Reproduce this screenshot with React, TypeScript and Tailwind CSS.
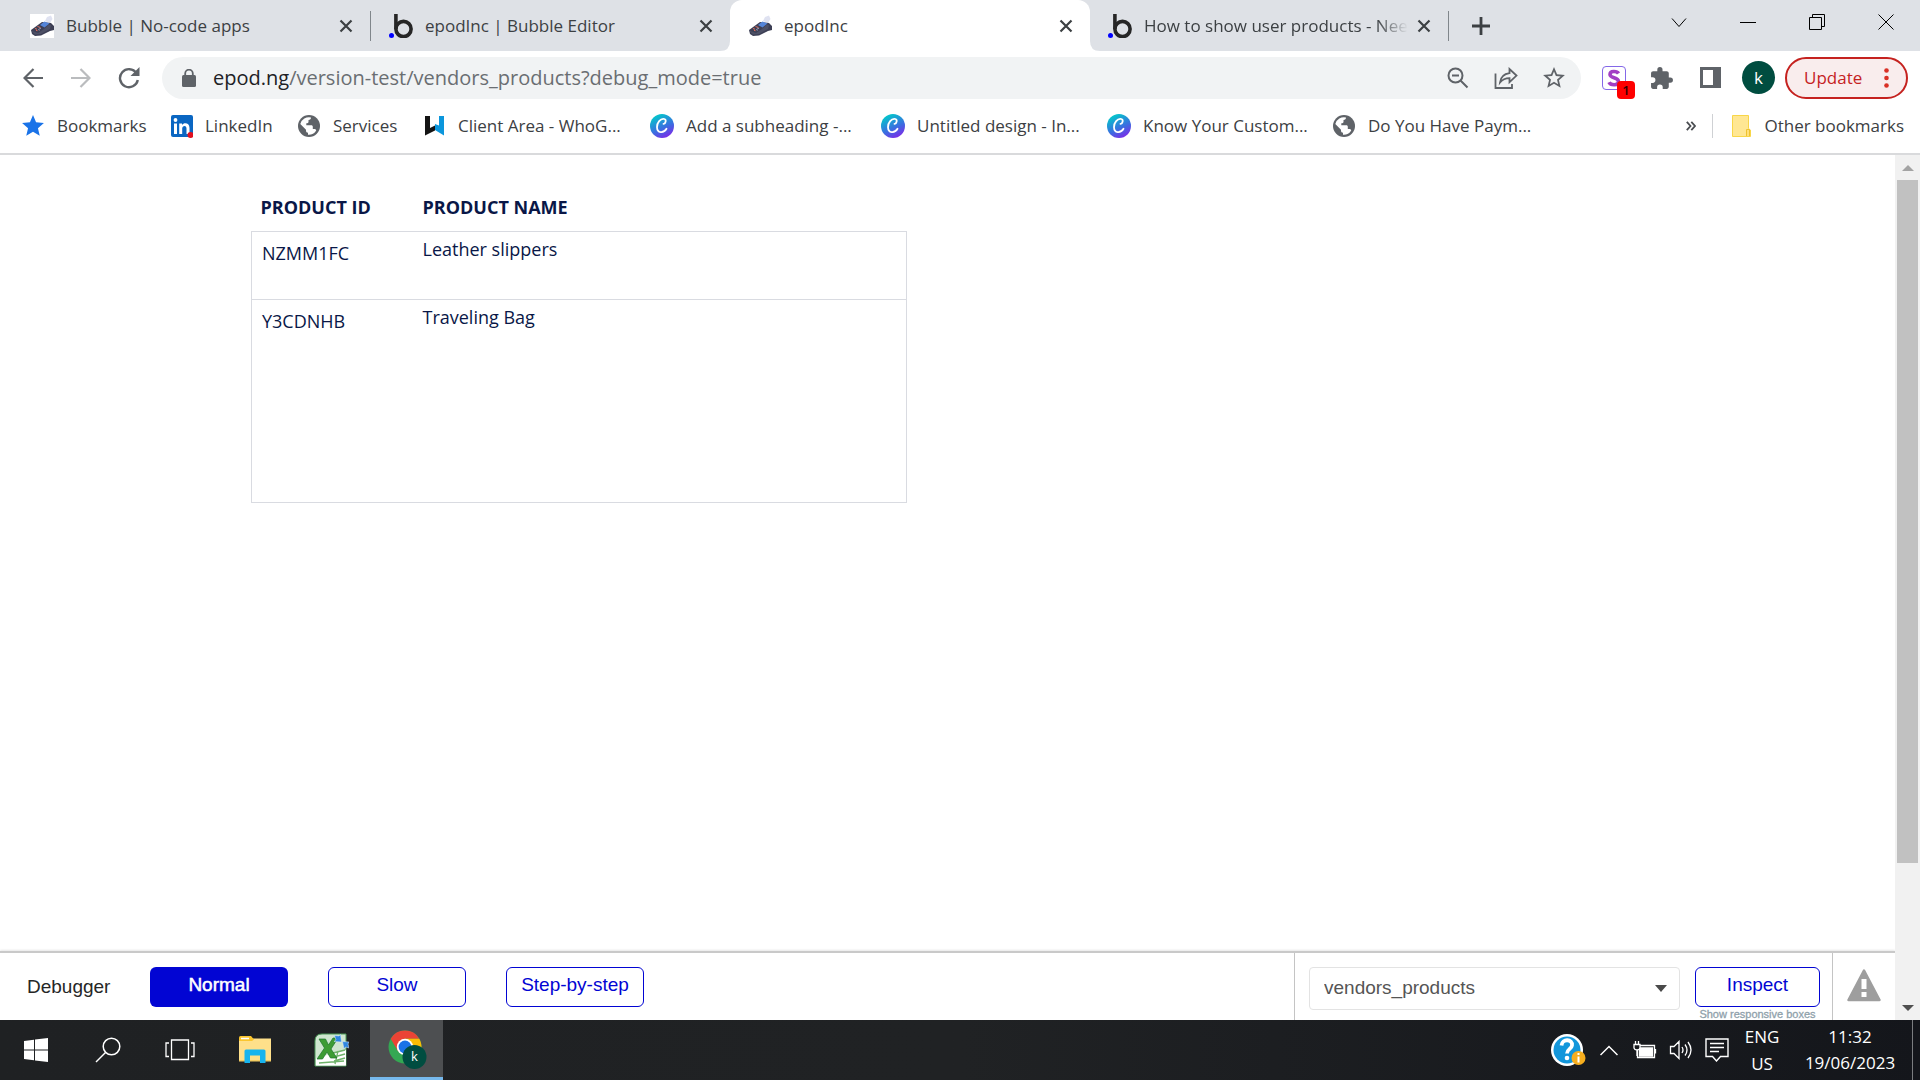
import type { ReactNode } from 'react'

const tabs = [
    { title: 'Bubble | No-code apps', icon: 'pos', active: false },
    { title: 'epodInc | Bubble Editor', icon: 'bubble', active: false },
    { title: 'epodInc', icon: 'pos', active: true },
    { title: 'How to show user products - Nee', icon: 'bubble', active: false },
]

const bookmarks = [
    { label: 'Bookmarks', icon: 'star', width: 'w-[148px]' },
    { label: 'LinkedIn', icon: 'linkedin', width: 'w-[128px]' },
    { label: 'Services', icon: 'globe', width: 'w-[125px]' },
    { label: 'Client Area - WhoG...', icon: 'whogohost', width: 'w-[228px]' },
    { label: 'Add a subheading -...', icon: 'canva', width: 'w-[231px]' },
    { label: 'Untitled design - In...', icon: 'canva', width: 'w-[226px]' },
    { label: 'Know Your Custom...', icon: 'canva', width: 'w-[225px]' },
    { label: 'Do You Have Paym...', icon: 'globe', width: 'w-[220px]' },
]

const products = [
    { id: 'NZMM1FC', name: 'Leather slippers', height: 'h-[68px]' },
    { id: 'Y3CDNHB', name: 'Traveling Bag', height: 'h-[203px]' },
]

export default function App() {
    return (
        <div className="flex h-screen flex-col overflow-hidden bg-white font-['Open_Sans','Noto_Sans',sans-serif] text-[#3c4043]">
            <TabStrip />
            <Toolbar />
            <BookmarksBar />
            <div className="flex min-h-0 flex-1">
                <div className="flex min-w-0 flex-1 flex-col">
                    <ProductsPage />
                    <Debugger />
                </div>
                <Scrollbar />
            </div>
            <Taskbar />
        </div>
    )
}

function TabStrip() {
    return (
        <header className="flex h-[51px] shrink-0 bg-[#dee1e6]">
            <div className="flex pl-3">
                {tabs.map((tab, i) => (
                    <div
                        key={i}
                        className={
                            tab.active
                                ? 'relative flex w-[360px] items-center rounded-t-xl bg-white pr-2 pl-[18px]'
                                : 'flex w-[359px] items-center pr-2 pl-[18px]'
                        }
                    >
                        {tab.active && <TabCurves />}
                        {tab.icon === 'pos' ? <PosIcon /> : <BubbleIcon />}
                        <span
                            className={
                                i === 3
                                    ? 'ml-3 flex-1 text-[17px] whitespace-nowrap [mask-image:linear-gradient(to_right,black_88%,transparent)]'
                                    : 'ml-3 flex-1 text-[17px] whitespace-nowrap'
                            }
                        >
                            {tab.title}
                        </span>
                        <button aria-label="Close tab" className="mx-1 flex h-6 w-6 items-center justify-center">
                            <svg width="14" height="14" viewBox="0 0 14 14" stroke="#3c4043" strokeWidth="2.2">
                                <path d="M1.5 1.5l11 11M12.5 1.5l-11 11" />
                            </svg>
                        </button>
                        {(i === 0 || i === 3) && <div className="-mr-2 ml-2 h-[30px] w-px bg-[#80868b]" />}
                    </div>
                ))}
            </div>
            <button aria-label="New tab" className="ml-5 flex w-6 items-center justify-center">
                <svg width="18" height="18" viewBox="0 0 18 18" stroke="#3c4043" strokeWidth="2.8">
                    <path d="M9 0v18M0 9h18" />
                </svg>
            </button>
            <div className="ml-auto flex h-11 text-black">
                <WindowButton label="Search tabs"><path d="M1 4.5l7 8 7-8" /></WindowButton>
                <WindowButton label="Minimize"><path d="M0 8.5h16" /></WindowButton>
                <WindowButton label="Restore"><path d="M.5 3.5h12v12H.5zM3.5 3.5v-3h12v12h-3" /></WindowButton>
                <WindowButton label="Close"><path d="M.5.5l15 15M15.5.5l-15 15" /></WindowButton>
            </div>
        </header>
    )
}

// Outward curves at the foot of the active tab
function TabCurves() {
    return (
        <>
            <svg className="absolute bottom-0 -left-[10px]" width="10" height="10" viewBox="0 0 10 10" fill="#fff">
                <path d="M10 0v10H0Q10 10 10 0z" />
            </svg>
            <svg className="absolute -right-[10px] bottom-0" width="10" height="10" viewBox="0 0 10 10" fill="#fff">
                <path d="M0 0v10h10Q0 10 0 0z" />
            </svg>
        </>
    )
}

function WindowButton({ label, children }: { label: string, children: ReactNode }) {
    return (
        <button aria-label={label} className="flex w-[69px] items-center justify-center">
            <svg width="16" height="16" viewBox="0 0 16 16" fill="none" stroke="currentColor">
                {children}
            </svg>
        </button>
    )
}

function Toolbar() {
    return (
        <div className="flex h-[53px] shrink-0 items-center pr-3 pl-[21px]">
            <button aria-label="Back" className="flex w-6 justify-center">
                <svg width="20" height="20" viewBox="0 0 20 20" fill="none" stroke="#5f6368" strokeWidth="2.2">
                    <path d="M20 10H2M10.5 1L1.5 10l9 9" />
                </svg>
            </button>
            <button aria-label="Forward" className="ml-6 flex w-6 justify-center">
                <svg width="20" height="20" viewBox="0 0 20 20" fill="none" stroke="#babcbe" strokeWidth="2.2">
                    <path d="M0 10h18M9.5 1l9 9-9 9" />
                </svg>
            </button>
            <button aria-label="Reload" className="ml-6 flex w-6 justify-center">
                <svg width="22" height="22" viewBox="0 0 22 22" fill="none" stroke="#5f6368" strokeWidth="2.4">
                    <path d="M18.5 6.2A9 9 0 1 0 19.8 13" />
                    <path d="M21.5 0v9h-9z" fill="#5f6368" stroke="none" />
                </svg>
            </button>
            <div className="ml-[21px] flex h-[42px] flex-1 items-center rounded-full bg-[#f1f3f4] pr-[15px] pl-5">
                <svg width="14" height="18" viewBox="0 0 14 18">
                    <rect y="6" width="14" height="12" rx="1.5" fill="#5f6368" />
                    <path d="M3.2 7V4.5a3.8 3.8 0 0 1 7.6 0V7" fill="none" stroke="#5f6368" strokeWidth="1.8" />
                </svg>
                <span className="ml-[17px] flex-1 pt-px text-[20px] whitespace-nowrap text-[#6a6e72]">
                    <span className="text-[#202124]">epod.ng</span>/version-test/vendors_products?debug_mode=true
                </span>
                <button aria-label="Zoom" className="flex w-6 justify-center">
                    <svg width="22" height="22" viewBox="0 0 22 22" fill="none" stroke="#5f6368" strokeWidth="2">
                        <circle cx="8.5" cy="8.5" r="7" />
                        <path d="M5 8.5h7M13.5 13.5l7 7" />
                    </svg>
                </button>
                <button aria-label="Share" className="ml-6 flex w-6 justify-center">
                    <svg width="24" height="22" viewBox="0 0 24 22" fill="none" stroke="#5f6368" strokeWidth="1.8">
                        <path d="M1.5 6.5V21H18v-4" />
                        <path d="M6 15.5c.6-5 3.5-8.500 9.500-9.300V2l7 6.600-7 6.500v-4c-4 0-7 1.200-9.500 4.400z" />
                    </svg>
                </button>
                <button aria-label="Bookmark this page" className="ml-6 flex w-6 justify-center">
                    <svg width="24" height="24" viewBox="1 1 22 22" fill="#5f6368">
                        <path d="M22 9.240l-7.190-.62L12 2 9.190 8.630 2 9.240l5.460 4.730L5.820 21 12 17.270 18.180 21l-1.630-7.030L22 9.240zM12 15.400l-3.760 2.270 1-4.280-3.320-2.880 4.380-.38L12 6.100l1.710 4.040 4.380.38-3.320 2.880 1 4.280L12 15.400z" />
                    </svg>
                </button>
            </div>
            <button aria-label="Extension" className="relative ml-[21px] h-6 w-6 rounded-sm border border-[#8468e8] bg-white">
                <svg className="mx-auto" width="14" height="18" viewBox="0 0 14 18" fill="none" stroke="#a23fc4" strokeWidth="3.6">
                    <path d="M11.500 4.500C10 2 3 1.500 3 5.500c0 4 8.500 2.500 8.500 7 0 4.500-8 4-9.500.8" />
                </svg>
                <span className="absolute top-[14px] left-[14px] h-[18px] w-[18px] rounded-sm bg-[#f00] text-center text-[13px] leading-[19px] font-semibold text-[#300]">1</span>
            </button>
            <button aria-label="Extensions" className="ml-6 flex w-6 justify-center">
                <svg width="24" height="24" viewBox="1 0 23 23" fill="#5f6368">
                    <path d="M20.500 11H19V7c0-1.100-.9-2-2-2h-4V3.500a2.500 2.500 0 0 0-5 0V5H4c-1.100 0-2 .9-2 2v3.800h1.500a2.700 2.700 0 0 1 0 5.400H2V20c0 1.100.9 2 2 2h3.800v-1.500a2.700 2.700 0 0 1 5.400 0V22H17c1.100 0 2-.9 2-2v-4h1.500a2.500 2.500 0 0 0 0-5z" />
                </svg>
            </button>
            <button aria-label="Side panel" className="ml-6 flex w-6 justify-center">
                <svg width="21" height="21" viewBox="0 0 21 21" fill="#5f6368">
                    <path fillRule="evenodd" d="M0 0h21v21H0zM3 3v15h10V3z" />
                </svg>
            </button>
            <button aria-label="Profile" className="ml-5 h-[33px] w-[33px] rounded-full bg-[#004d40] text-[17px] leading-8 text-white">k</button>
            <button className="ml-[10px] flex h-[42px] w-[123px] items-center justify-between rounded-full border-2 border-[#c5221f] bg-[#f9eded] pr-[17px] pl-[17px] text-[17px] text-[#c5221f]">
                Update
                <svg width="5" height="20" viewBox="0 0 5 20" fill="#d93025">
                    <circle cx="2.500" cy="2.500" r="2.300" />
                    <circle cx="2.500" cy="10" r="2.300" />
                    <circle cx="2.500" cy="17.500" r="2.300" />
                </svg>
            </button>
        </div>
    )
}

function BookmarksBar() {
    return (
        <nav className="flex h-[51px] shrink-0 items-center border-b-2 border-[#d9dadc] pr-4 pb-[6px] pl-[21px] text-[17px]">
            {bookmarks.map((b, i) => (
                <a key={i} href="#" className={`flex shrink-0 items-center gap-3 whitespace-nowrap ${b.width}`}>
                    <BookmarkIcon name={b.icon} />
                    {b.label}
                </a>
            ))}
            <button aria-label="More bookmarks" className="ml-auto">
                <svg width="10" height="10" viewBox="0 0 10 10" fill="none" stroke="#4a4d51" strokeWidth="1.800">
                    <path d="M.8.8L4.500 5 .8 9.200M5.300.8L9 5 5.300 9.200" />
                </svg>
            </button>
            <div className="mr-[19px] ml-4 h-6 w-px bg-[#cfd1d4]" />
            <a href="#" className="flex items-center gap-[13px] whitespace-nowrap">
                <svg width="19" height="22" viewBox="0 0 19 22">
                    <path d="M.5.5h16v13l2 1.500v6.500H.5z" fill="#ffe793" stroke="#f8d648" />
                    <path d="M14.500 21v-6.500h3V21" fill="#ffe07a" stroke="#efc22f" />
                </svg>
                Other bookmarks
            </a>
        </nav>
    )
}

function BookmarkIcon({ name }: { name: string }) {
    if (name === 'star') {
        return (
            <svg width="24" height="24" viewBox="1 1 22 22" fill="#1a73e8">
                <path d="M12 17.270L18.180 21l-1.640-7.030L22 9.240l-7.190-.61L12 2 9.190 8.630 2 9.240l5.460 4.730L5.820 21z" />
            </svg>
        )
    }
    if (name === 'linkedin') {
        return (
            <svg width="24" height="24" viewBox="0 0 24 24">
                <rect x="2" y="1" width="22" height="22" rx="2" fill="#0a66c2" />
                <path d="M5 9.500h3V20H5zM10.200 9.500H13V11c1.800-2.600 7.500-2.400 7.500 2.800V20h-3v-5.500c0-3.500-4.300-3.200-4.300 0V20h-3z" fill="#fff" />
                <circle cx="6.500" cy="6" r="1.900" fill="#fff" />
                <circle cx="21.500" cy="21" r="3" fill="#e11020" />
            </svg>
        )
    }
    if (name === 'globe') {
        return (
            <svg width="24" height="24" viewBox="0 0 24 24">
                <circle cx="12" cy="12" r="11" fill="#5f6368" />
                <path d="M14 3.500c0 1.500-.8 2.500-2.500 2.500v2c0 1-1 1.300-2.200 1.300v2h5c1 0 1.500.6 1.500 1.500v2.300h1.400c1 0 1.700.5 2 1.400A9 9 0 0 1 11 20.800v-2c-1.200 0-2-1-2-2v-1L3.300 10A9 9 0 0 1 14 3.500z" fill="#fff" />
            </svg>
        )
    }
    if (name === 'whogohost') {
        return (
            <svg width="24" height="24" viewBox="0 0 24 24">
                <path d="M3 2h5v12l5-2.500v5L3 21.500z" fill="#141414" />
                <path d="M22 2h-5v9.500l-4-1.500v6l9 5.500z" fill="#0b96dc" />
            </svg>
        )
    }
    return (
        <svg width="24" height="24" viewBox="0 0 24 24">
            <defs>
                <linearGradient id="canva" x1="0.200" y1="0" x2="0.700" y2="1">
                    <stop offset="0.100" stopColor="#06c1cc" />
                    <stop offset="0.600" stopColor="#3a6fe0" />
                    <stop offset="1" stopColor="#7d2ae8" />
                </linearGradient>
            </defs>
            <circle cx="12" cy="12" r="12" fill="url(#canva)" />
            <path d="M13.500 9.800c2 .2 3.300-4 .8-4.800C10.500 4 6.800 9 7 13.200c.2 6 6.500 6.500 9.500 1.600" fill="none" stroke="#fff" strokeWidth="1.800" strokeLinecap="round" />
        </svg>
    )
}

function ProductsPage() {
    return (
        <main className="flex-1 pt-[33px] pl-[251px]">
            <table className="w-[656px] table-fixed border-collapse text-left text-[18px] leading-6 text-[#091747]">
                <thead>
                    <tr className="h-[43px] align-top">
                        <th className="w-[171px] pt-[7px] pl-[9px] font-bold">PRODUCT ID</th>
                        <th className="pt-[7px] font-bold">PRODUCT NAME</th>
                    </tr>
                </thead>
                <tbody>
                    {products.map(p => (
                        <tr key={p.id} className={`border border-[#d9dbe1] align-top ${p.height}`}>
                            <td className="pt-[9px] pl-[10px]">{p.id}</td>
                            <td className="pt-[5px]">{p.name}</td>
                        </tr>
                    ))}
                </tbody>
            </table>
        </main>
    )
}

function Debugger() {
    return (
        <footer className="flex h-[69px] shrink-0 border-t-2 border-[#c9c9c9] pl-[27px] font-['Liberation_Sans',Arial,sans-serif] text-[19px] shadow-[0_-1px_2px_#0000001a]">
            <div className="flex items-start gap-10 pt-[14px] text-[#0205d3]">
                <span className="w-[83px] leading-10 text-[#262626]">Debugger</span>
                <button className="h-10 w-[138px] rounded-md bg-[#0205d3] pb-1 text-white [-webkit-text-stroke:0.5px]">Normal</button>
                <button className="h-10 w-[138px] rounded-md border border-[#0205d3] pb-1">Slow</button>
                <button className="h-10 w-[138px] rounded-md border border-[#0205d3] pb-1">Step-by-step</button>
            </div>
            <div className="ml-auto flex border-l border-[#c4c4c4] pl-[14px]">
                <div className="relative mt-[14px] h-[43px] w-[371px]">
                    <select aria-label="Element" className="h-full w-full appearance-none rounded-sm border border-[#e3e3e3] pl-[14px] text-[#555]">
                        <option>vendors_products</option>
                    </select>
                    <svg className="pointer-events-none absolute top-[18px] right-[13px]" width="12" height="7" viewBox="0 0 12 7" fill="#4a4a4a">
                        <path d="M0 0h12L6 7z" />
                    </svg>
                </div>
                <div className="mr-3 ml-[15px] flex flex-col items-center pt-[14px]">
                    <button className="h-10 w-[125px] rounded-md border border-[#0205d3] pb-1 text-[#0205d3]">Inspect</button>
                    <a href="#" className="mt-px text-[11px] leading-3 text-[#8fa1ab] [-webkit-text-stroke:0.3px]">Show responsive boxes</a>
                </div>
                <div className="border-l border-[#c4c4c4] px-[14px] pt-4">
                    <svg width="34" height="33" viewBox="0 0 34 33">
                        <path d="M17 1.500L32.500 31h-31z" fill="#9e9e9e" stroke="#9e9e9e" strokeWidth="2.500" strokeLinejoin="round" />
                        <path d="M14.500 10h5v10h-5zM14.500 23h5v5h-5z" fill="#fff" />
                    </svg>
                </div>
            </div>
        </footer>
    )
}

function Scrollbar() {
    return (
        <div className="flex w-[25px] flex-col items-center justify-between bg-[#f1f1f1]">
            <svg className="mt-[10px] shrink-0" width="12" height="6" viewBox="0 0 12 6" fill="#a3a3a3"><path d="M0 6l6-6 6 6z" /></svg>
            <div className="mt-[9px] w-[21px] flex-1 bg-[#c1c1c1]" />
            <div className="flex h-[157px] items-end pb-[9px]">
                <svg width="12" height="6" viewBox="0 0 12 6" fill="#505050"><path d="M0 0l6 6 6-6z" /></svg>
            </div>
        </div>
    )
}

function Taskbar() {
    return (
        <div className="flex h-[60px] shrink-0 items-stretch bg-linear-to-r from-[#1f2123] via-[#202224] to-[#14161b] text-white">
            <TaskButton label="Start" width="w-[72px]">
                <svg width="24" height="24" viewBox="0 0 24 24" fill="#fff">
                    <path d="M0 3l10-1.300v9.800H0zM11 1.500L24 0v11.500H11zM0 12.500h10v9.800L0 21zM11 12.500h13V24l-13-1.500z" />
                </svg>
            </TaskButton>
            <TaskButton label="Search" width="w-[72px]">
                <svg width="26" height="26" viewBox="0 0 26 26" fill="none" stroke="#fff" strokeWidth="1.500">
                    <circle cx="16.500" cy="9.500" r="8.300" />
                    <path d="M10.500 15.500L1 25" />
                </svg>
            </TaskButton>
            <TaskButton label="Task view" width="w-[72px]">
                <svg width="30" height="22" viewBox="0 0 30 22" fill="none" stroke="#fff" strokeWidth="1.300">
                    <path d="M6.500 1h17v19.500h-17zM4 4H1v13.500h3M26 4h3v13.500h-3" />
                </svg>
            </TaskButton>
            <TaskButton label="File Explorer" width="w-[77px]">
                <svg width="32" height="28" viewBox="0 0 32 28">
                    <path d="M0 2.500h32V25H0z" fill="#ffe08a" />
                    <path d="M0 1.500Q0 0 1.500 0H12l3 3.500L13 5H0z" fill="#fbc62e" />
                    <path d="M2 2.500h8" stroke="#fff" strokeWidth="1.500" />
                    <path d="M0 24h32v1.500H0z" fill="#f3cc62" />
                    <path d="M5.500 27V15q0-1.500 1.500-1.500h18q1.500 0 1.500 1.500v12H21v-7.500H11V27z" fill="#18b4ee" />
                </svg>
            </TaskButton>
            <TaskButton label="Excel" width="w-[77px]">
                <svg width="35" height="34" viewBox="0 0 35 34">
                    <path d="M1 8Q1 1 8 1h24v32H1z" fill="#cfe6cf" stroke="#4c9a58" />
                    <path d="M2 25L32 17v15.500H2z" fill="#fff" />
                    <path d="M19 20l12-3M20 24l11-3M20 28l11-3M5 30l25-2M24 18l-3 13" stroke="#6fb36a" strokeWidth="1.300" />
                    <path d="M5 6h6.500l3 6L19 5h5l-7 11 6 9h-6.500l-3.500-6-4.500 7H3l7.500-11z" fill="#3d9c34" stroke="#1d742b" strokeWidth=".7" />
                    <path d="M20.500 2.500l4.500.5 1.500-1.500 1 7.500-7.500-.5L22 7z" fill="#2f86e0" stroke="#dceafa" strokeWidth=".5" />
                    <path d="M35 15l-3.500-1-1.500 2-1.500-7.500 6.500.5-1 2z" fill="#2f86e0" stroke="#dceafa" strokeWidth=".5" />
                </svg>
            </TaskButton>
            <button aria-label="Google Chrome" className="flex w-[73px] items-center justify-center border-b-[3px] border-[#76b9ed] bg-[#4d4f51]">
                <svg width="40" height="40" viewBox="0 0 40 40">
                    <circle cx="18" cy="18" r="16.500" fill="#34a853" />
                    <path d="M3.700 9.800A16.500 16.500 0 0 1 32.300 9.800H18L10.900 22.100z" fill="#ea4335" />
                    <path d="M32.300 9.800A16.500 16.500 0 0 1 18 34.500l7.100-12.400L18 9.800z" fill="#fbbc04" />
                    <circle cx="18" cy="18" r="8.200" fill="#fff" />
                    <circle cx="18" cy="18" r="6.400" fill="#1a73e8" />
                    <circle cx="27.500" cy="28" r="12" fill="#004d40" />
                    <text x="27.500" y="32" fill="#fff" fontSize="13" textAnchor="middle">k</text>
                </svg>
            </button>
            <div className="ml-auto flex items-center">
                <svg width="36" height="36" viewBox="0 0 36 36">
                    <circle cx="17" cy="18" r="16" fill="#fff" />
                    <circle cx="17" cy="18" r="13.500" fill="#1296db" />
                    <path d="M11.500 13.500C12 6 23 7 22 13.500c-.5 3.500-5 3.500-5 8" fill="none" stroke="#fff" strokeWidth="3.800" />
                    <circle cx="17" cy="26" r="2.300" fill="#fff" />
                    <circle cx="28.500" cy="26" r="7" fill="#f6ae1e" />
                    <path d="M28.500 24.500v6M28.500 21v2" stroke="#fff" strokeWidth="2" />
                </svg>
                <svg className="ml-[14px]" width="18" height="11" viewBox="0 0 18 11" fill="none" stroke="#fff" strokeWidth="1.500">
                    <path d="M.5 10L9 1.500l8.500 8.500" />
                </svg>
                <svg className="ml-[15px]" width="24" height="18" viewBox="0 0 24 18" fill="none" stroke="#fff" strokeWidth="1.300">
                    <path d="M7 4.500h14.500v12H4.500V9M22.500 8v4.500" />
                    <path d="M7.500 7h12v8h-13V9z" fill="#fff" />
                    <path d="M1 3.500h6V7Q6.500 9 4 9T1 7zM2.500 0v3.500M5.500 0v3.500M4 9v6" />
                </svg>
                <svg className="ml-3" width="24" height="20" viewBox="0 0 24 20" fill="none" stroke="#fff" strokeWidth="1.300">
                    <path d="M1.500 6.500H5l5-5v17l-5-5H1.500zM13 7q2 3 0 6M16 4.500q4 5.500 0 11M19 2q6 8 0 16" />
                </svg>
                <svg className="ml-3" width="24" height="24" viewBox="0 0 24 24" fill="none" stroke="#fff" strokeWidth="1.400">
                    <path d="M1 1h22v17.500h-7.500L11.500 23l-4-4.500H1zM5 5.500h14M5 9.500h14M5 13.500h9" />
                </svg>
                <div className="ml-3 w-[42px] text-center text-[17px] leading-[27px]">
                    <div>ENG</div>
                    <div>US</div>
                </div>
                <div className="ml-4 w-[102px] text-center text-[17px] leading-[26px]">
                    <div>11:32</div>
                    <div>19/06/2023</div>
                </div>
                <div className="mr-[7px] ml-[11px] h-[60px] w-px bg-[#7b7d80]" />
            </div>
        </div>
    )
}

function TaskButton({ label, width, children }: { label: string, width: string, children: ReactNode }) {
    return (
        <button aria-label={label} className={`flex items-center justify-center ${width}`}>
            {children}
        </button>
    )
}

function PosIcon() {
    return (
        <svg className="shrink-0" width="24" height="24" viewBox="0 0 24 24">
            <rect width="24" height="24" fill="#fff" />
            <path d="M15 7l2-4 4-1.500L22.500 5 20 9z" fill="#dfe2f1" />
            <path d="M1 16l11-8 9 1 3 3v4l-4 1-9 4.500-6 .5-3-2z" fill="#3d3f55" />
            <path d="M10 11l4.500-3.500 5 2-5 4z" fill="#5484d8" />
            <path d="M1 16.500l7 2.500 6-4 5-4.500 2 1-1 3.500-9 5-6 .5z" fill="#4d5066" />
            <path d="M5 14.500l2 .7M7.500 12.500l3 1M6 16.300l1.500.4" stroke="#e36d5a" />
            <path d="M9 14l2 .7M8 15.500l2 .7" stroke="#8c92ac" />
        </svg>
    )
}

function BubbleIcon() {
    return (
        <svg className="shrink-0" width="24" height="24" viewBox="0 0 24 24">
            <circle cx="14.500" cy="15" r="7.600" fill="none" stroke="#262626" strokeWidth="3.600" />
            <path d="M6.900 0v15" stroke="#262626" strokeWidth="3.600" />
            <circle cx="2.500" cy="21.500" r="2.500" fill="#0000ff" />
        </svg>
    )
}
